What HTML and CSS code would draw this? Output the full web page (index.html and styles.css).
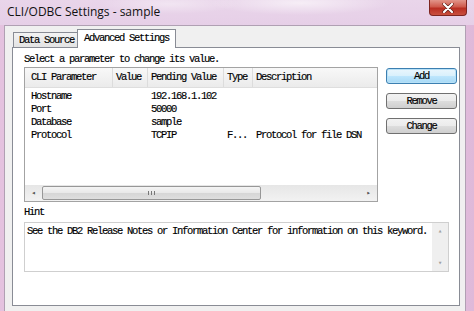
FILE: index.html
```html
<!DOCTYPE html>
<html lang="en">
<head>
    <meta charset="UTF-8">
    <title>CLI/ODBC Settings - sample</title>
    <link rel="stylesheet" href="styles.css">
</head>
<body>
    <div class="window">
        <div class="titlebar">
            <span class="title">CLI/ODBC Settings - sample</span>
            <div class="close">
                <svg width="12" height="10" viewBox="0 0 12 10">
                    <path d="M2 1 L10 9 M10 1 L2 9" stroke="#5a1a14" stroke-width="3.4" stroke-linecap="round"/>
                    <path d="M2 1 L10 9 M10 1 L2 9" stroke="#ffffff" stroke-width="2.2" stroke-linecap="round"/>
                </svg>
            </div>
        </div>

        <div class="client">
            <div class="tabs">
                <div class="tab">Data Source</div>
                <div class="tab active">Advanced Settings</div>
            </div>

            <div class="panel">
                <div class="caption">Select a parameter to change its value.</div>

                <div class="main">
                    <div class="list">
                        <div class="list-head">
                            <div class="col first">CLI Parameter</div>
                            <div class="col">Value</div>
                            <div class="col">Pending Value</div>
                            <div class="col">Type</div>
                            <div class="col">Description</div>
                        </div>
                        <div class="list-body">
                            <div class="row">
                                <div class="cell first">Hostname</div>
                                <div class="cell"></div>
                                <div class="cell">192.168.1.102</div>
                                <div class="cell"></div>
                                <div class="cell"></div>
                            </div>
                            <div class="row">
                                <div class="cell first">Port</div>
                                <div class="cell"></div>
                                <div class="cell">50000</div>
                                <div class="cell"></div>
                                <div class="cell"></div>
                            </div>
                            <div class="row">
                                <div class="cell first">Database</div>
                                <div class="cell"></div>
                                <div class="cell">sample</div>
                                <div class="cell"></div>
                                <div class="cell"></div>
                            </div>
                            <div class="row">
                                <div class="cell first">Protocol</div>
                                <div class="cell"></div>
                                <div class="cell">TCPIP</div>
                                <div class="cell">F...</div>
                                <div class="cell">Protocol for file DSN</div>
                            </div>
                        </div>
                        <div class="hscroll">
                            <div class="arrow">&#9666;</div>
                            <div class="track">
                                <div class="thumb"><span class="grip"></span></div>
                            </div>
                            <div class="arrow">&#9656;</div>
                        </div>
                    </div>

                    <div class="buttons">
                        <button class="btn default">Add</button>
                        <button class="btn">Remove</button>
                        <button class="btn">Change</button>
                    </div>
                </div>

                <div class="caption hint-label">Hint</div>
                <div class="hint">
                    <div class="hint-text">See the DB2 Release Notes or Information Center for information on this keyword.</div>
                    <div class="vscroll">
                        <div class="varrow">&#9652;</div>
                        <div class="vtrack"></div>
                        <div class="varrow">&#9662;</div>
                    </div>
                </div>
            </div>
        </div>
    </div>
</body>
</html>
```

FILE: styles.css
```css
body {
    margin: 0;
    overflow: hidden;
}
.window {
    width: 474px;
    height: 311px;
    display: flex;
    flex-direction: column;
    background: linear-gradient(to right, #e4c2df 0%, #e9d3ea 30%, #ecdbee 60%, #dfb9d9 100%);
    overflow: hidden;
}
.titlebar {
    height: 25px;
    flex: none;
    position: relative;
    background:
        radial-gradient(ellipse 90px 12px at 300px 3px, rgba(255,255,255,0.6), rgba(255,255,255,0)),
        radial-gradient(ellipse 70px 10px at 170px 4px, rgba(255,255,255,0.4), rgba(255,255,255,0)),
        linear-gradient(to bottom, #e9d5ea, #e6cfe7);
}
.title {
    position: absolute;
    left: 7px;
    top: 4px;
    font-family: "Open Sans", sans-serif;
    font-size: 12px;
    color: #111;
    line-height: 16px;
}
.close {
    position: absolute;
    left: 429px;
    top: 0;
    width: 36px;
    height: 15px;
    border: 1px solid #7e2520;
    border-top: none;
    border-radius: 0 0 4px 4px;
    background: linear-gradient(to bottom, #e2958a 0%, #cf5a4c 45%, #b92e22 55%, #c9503f 100%);
    display: flex;
    align-items: center;
    justify-content: center;
}
.client {
    flex: 1;
    margin: 0 8px 0 4px;
    background: #f0f0f0;
    border: 1px solid #b0a0b3;
    border-bottom: none;
    font-family: "Liberation Mono", monospace;
    font-size: 10.5px;
    letter-spacing: -1.3px;
    color: #000;
    -webkit-text-stroke: 0.15px #000;
}
.tabs {
    display: flex;
    align-items: flex-end;
    padding: 3px 0 0 8px;
    height: 18px;
    position: relative;
    z-index: 1;
}
.tab {
    height: 14px;
    line-height: 14px;
    padding: 0 0 0 5px;
    width: 58px;
    border: 1px solid #898c95;
    border-bottom: none;
    background: linear-gradient(to bottom, #f3f3f3, #e3e3e3);
    white-space: nowrap;
}
.tab.active {
    height: 18px;
    line-height: 17px;
    width: 91px;
    padding-left: 6px;
    margin-left: -1px;
    background: #fff;
    margin-bottom: -1px;
}
.panel {
    margin-left: 7px;
    width: 448px;
    height: 259px;
    border: 1px solid #898c95;
    background: #fff;
    padding: 5px 0 0 11px;
    box-sizing: border-box;
}
.caption {
    line-height: 12px;
    height: 12px;
    white-space: nowrap;
}
.main {
    display: flex;
    margin-top: 2px;
}
.list {
    width: 354px;
    height: 135px;
    box-sizing: border-box;
    border: 1px solid #a3a3a3;
    display: flex;
    flex-direction: column;
}
.list-head,
.row {
    display: grid;
    grid-template-columns: 87px 35px 76px 29px 1fr;
}
.list-head {
    height: 19px;
    line-height: 19px;
    background: linear-gradient(to bottom, #f8f8f8, #ebebeb);
    border-bottom: 1px solid #dedede;
}
.col {
    padding-left: 3px;
    border-left: 1px solid #dcdcdc;
    white-space: nowrap;
    overflow: hidden;
}
.col.first,
.cell.first {
    padding-left: 6px;
    border-left: none;
}
.list-body {
    flex: 1;
    padding-top: 2px;
}
.row {
    height: 13px;
    line-height: 13px;
}
.cell {
    padding-left: 4px;
    white-space: nowrap;
    overflow: hidden;
}
.hscroll {
    height: 16px;
    display: flex;
    background: linear-gradient(to bottom, #e6e6e6, #f2f2f2);
    letter-spacing: 0;
    -webkit-text-stroke: 0;
}
.arrow {
    width: 17px;
    font-size: 7px;
    line-height: 16px;
    text-align: center;
    color: #555;
}
.track {
    flex: 1;
    padding: 1px 0;
}
.thumb {
    width: 217px;
    height: 12px;
    border: 1px solid #979797;
    border-radius: 2px;
    background: linear-gradient(to bottom, #f4f4f4 0%, #e8e8e8 50%, #d6d6d6 51%, #dedede 100%);
    display: flex;
    align-items: center;
    justify-content: center;
}
.grip {
    width: 5px;
    height: 4px;
    border-left: 1px solid #777;
    border-right: 1px solid #777;
    background: linear-gradient(to right, transparent 2px, #777 2px, #777 3px, transparent 3px);
}
.buttons {
    margin-left: 8px;
    margin-top: 1px;
    display: flex;
    flex-direction: column;
    gap: 9px;
}
.btn {
    width: 71px;
    height: 16px;
    padding: 0;
    border: 1px solid #707070;
    border-radius: 3px;
    background: linear-gradient(to bottom, #f2f2f2 0%, #ebebeb 50%, #dddddd 51%, #cfcfcf 100%);
    font-family: "Liberation Mono", monospace;
    font-size: 10.5px;
    letter-spacing: -1.3px;
    color: #000;
    -webkit-text-stroke: 0.15px #000;
    line-height: 14px;
}
.btn.default {
    border-color: #3c7fb1;
    box-shadow: inset 0 0 0 1px #b8e1f7;
    background: linear-gradient(to bottom, #eaf6fd 0%, #d9f0fc 50%, #bee6fd 51%, #a7d9f5 100%);
}
.hint-label {
    margin-top: 4px;
}
.hint {
    margin-top: 4px;
    width: 425px;
    height: 50px;
    box-sizing: border-box;
    border: 1px solid #cfcfcf;
    display: flex;
}
.hint-text {
    flex: 1;
    padding: 2px 0 0 2px;
    line-height: 12px;
    white-space: nowrap;
    overflow: hidden;
}
.vscroll {
    width: 16px;
    display: flex;
    flex-direction: column;
    background: #efefef;
    letter-spacing: 0;
    -webkit-text-stroke: 0;
}
.varrow {
    height: 16px;
    line-height: 16px;
    text-align: center;
    font-size: 7px;
    color: #a0a0a0;
}
.vtrack {
    flex: 1;
}
```
